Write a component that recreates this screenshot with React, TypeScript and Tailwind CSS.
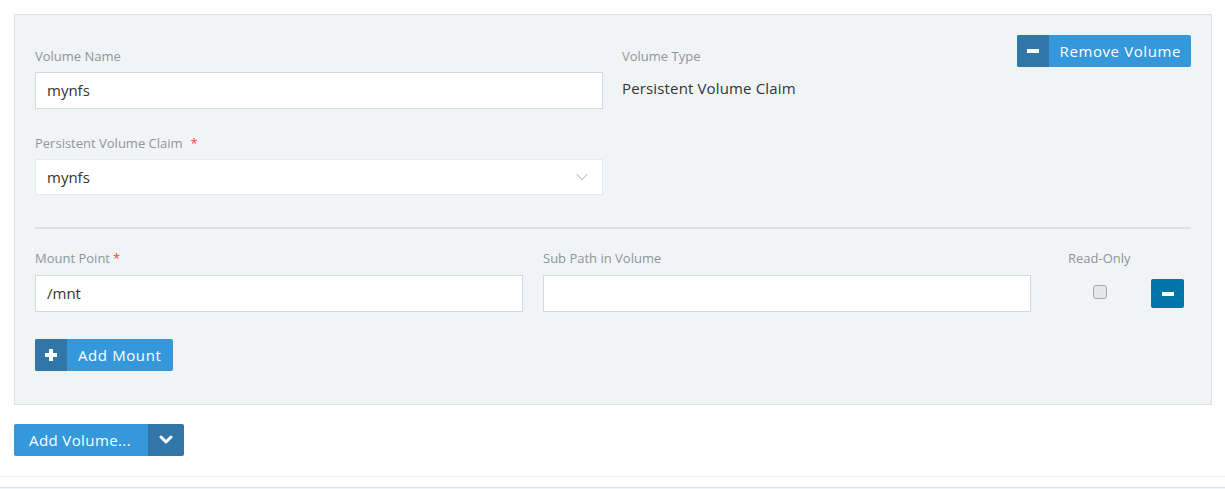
import { ChevronDown } from 'lucide-react'

function Label({ text, required, gap, tall }: { text: string; required?: boolean; gap?: boolean; tall?: boolean }) {
  return (
    <div className={`${tall ? 'mb-[8px]' : 'mb-[7px]'} h-[18px] text-[13px] leading-[18px] text-[#8f959b]`}>
      {text}
      {required && <span className={`${gap ? 'ml-[8px]' : 'ml-[3px]'} text-[#e74c3c]`}>*</span>}
    </div>
  )
}

function TextBox({ value, width }: { value?: string; width: string }) {
  return (
    <div className={`flex h-[37px] items-center border border-[#d3d8db] bg-white px-[11px] text-[15px] text-[#333] ${width}`}>
      {value}
    </div>
  )
}

function MinusGlyph() {
  return <span className="block h-[4px] w-[12px] bg-white" />
}

function PlusGlyph() {
  return (
    <span className="relative block h-[12px] w-[12px]">
      <span className="absolute left-0 top-[4px] h-[4px] w-[12px] bg-white" />
      <span className="absolute left-[4px] top-0 h-[12px] w-[4px] bg-white" />
    </span>
  )
}

export default function App() {
  return (
    <div className="h-[489px] w-[1225px] overflow-hidden bg-white font-['Open_Sans',sans-serif]">
      <div className="pl-[14px] pt-[14px]">
        <div className="w-[1198px] border border-[#dde1e3] bg-[#f0f4f5] px-[20px] pb-[33px] pt-[20px]">
          <div className="flex items-start">
            <div className="w-[568px] pt-[12px]">
              <Label text="Volume Name" />
              <TextBox value="mynfs" width="w-[568px]" />
              <div className="mt-[25px]">
                <Label text="Persistent Volume Claim" required gap />
                <div className="flex h-[36px] w-[568px] items-center justify-between border border-[#e6eaec] bg-white pl-[11px] pr-[10px] text-[15px] text-[#333]">
                  mynfs
                  <ChevronDown size={20} strokeWidth={1} className="text-[#8a9096]" />
                </div>
              </div>
            </div>
            <div className="ml-[19px] flex-1 pt-[12px]">
              <Label text="Volume Type" />
              <div className="flex h-[33px] items-center text-[15px] tracking-[0.15px] text-[#333]">Persistent Volume Claim</div>
            </div>
            <button className="flex h-[32px] overflow-hidden rounded-[2px] bg-[#3498db] text-[15px] tracking-[0.6px] text-white">
              <span className="flex h-full w-[32px] items-center justify-center bg-[#3077a8]">
                <MinusGlyph />
              </span>
              <span className="flex h-full items-center pl-[11px] pr-[10px]">Remove Volume</span>
            </button>
          </div>

          <div className="mt-[32px] h-[2px] w-full bg-[#dce1e3]" />

          <div className="mt-[20px] flex items-start">
            <div className="w-[488px]">
              <Label text="Mount Point" required tall />
              <TextBox value="/mnt" width="w-[488px]" />
            </div>
            <div className="ml-[20px] w-[488px]">
              <Label text="Sub Path in Volume" tall />
              <TextBox width="w-[488px]" />
            </div>
            <div className="ml-[37px] w-[70px]">
              <Label text="Read-Only" tall />
              <div className="flex h-[37px] items-center pl-[25px]">
                <span className="mb-[4px] block h-[14px] w-[14px] rounded-[3px] border border-[#a9acaf] bg-[#e6e7e8]" />
              </div>
            </div>
            <button className="ml-[13px] mt-[30px] flex h-[29px] w-[33px] items-center justify-center rounded-[2px] bg-[#0075a8]">
              <MinusGlyph />
            </button>
          </div>

          <button className="mt-[27px] flex h-[32px] overflow-hidden rounded-[2px] bg-[#3498db] text-[15px] tracking-[0.6px] text-white">
            <span className="flex h-full w-[32px] items-center justify-center bg-[#3077a8]">
              <PlusGlyph />
            </span>
            <span className="flex h-full items-center pl-[11px] pr-[12px]">Add Mount</span>
          </button>
        </div>

        <div className="mt-[19px] flex h-[32px] w-[170px] overflow-hidden rounded-[2px] text-[15px] tracking-[0.4px] text-white">
          <span className="flex h-full w-[134px] items-center bg-[#3498db] pl-[15px]">Add Volume...</span>
          <span className="flex h-full w-[36px] items-center justify-center bg-[#3077a8]">
            <svg width="14" height="10" viewBox="0 0 14 10">
              <polyline points="2,2 7,7 12,2" fill="none" stroke="white" strokeWidth="3" strokeLinecap="round" strokeLinejoin="round" />
            </svg>
          </span>
        </div>
      </div>

      <div className="mt-[20px] h-[1px] w-full bg-[#e8ecec]" />
      <div className="mt-[10px] h-[20px] w-full border-t border-[#dde2e2] bg-[#f0f4f5]" />
    </div>
  )
}
